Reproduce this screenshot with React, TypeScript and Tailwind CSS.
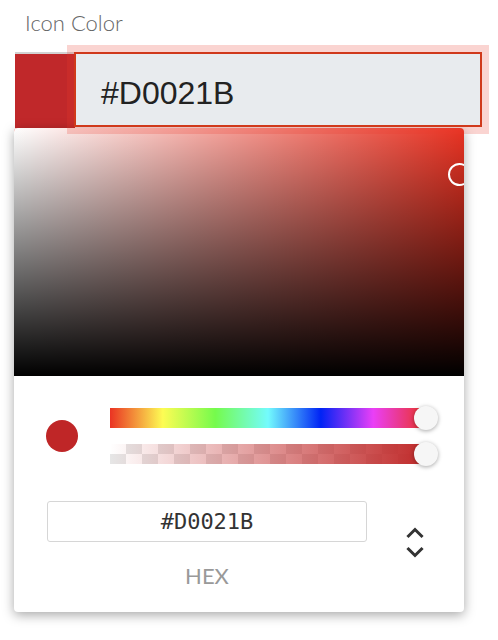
const HUE = '#ea3323';

const Chevrons = () => (
  <svg width="18" height="34" viewBox="0 0 18 34" fill="none">
    <polyline points="2.5,10 9,3.5 15.5,10" stroke="#333" strokeWidth="3" strokeLinecap="square" />
    <polyline points="2.5,23 9,29.5 15.5,23" stroke="#333" strokeWidth="3" strokeLinecap="square" />
  </svg>
);

const App = () => {
  return (
    <div className="relative w-[498px] h-[640px] bg-white overflow-hidden">
      <div className="pt-[10px] pl-[25px] h-[36px] text-[22px] leading-[26px] font-light text-[#666] font-[Lato,'Open_Sans',sans-serif]">
        Icon Color
      </div>

      <div className="flex mt-[16px] ml-[15px]">
        <div className="w-[60px] h-[76px] bg-[#c0282a] border-t-2 border-[#d2d2d2]"></div>
        <div className="relative z-10 -ml-px w-[408px] h-[75px] border-2 border-[#d0391b] bg-[#e8ebee] shadow-[0_0_0_7px_rgba(232,58,44,0.22)] flex items-center pt-[7px] pl-[25px]">
          <span className="text-[32px] text-[#222] font-['Liberation_Sans',Arial,sans-serif]">#D0021B</span>
        </div>
      </div>

      {/* color picker popover */}
      <div className="absolute left-[14px] top-[128px] w-[450px] h-[484px] rounded-[4px] bg-white overflow-hidden shadow-[0_3px_12px_rgba(0,0,0,0.35)]">
        <div className="relative h-[248px] overflow-hidden" style={{ backgroundColor: HUE }}>
          <div className="absolute inset-0 bg-gradient-to-r from-white to-white/0"></div>
          <div className="absolute inset-0 bg-gradient-to-b from-black/0 to-black"></div>
          <div className="absolute left-[434px] top-[35px] w-[23px] h-[23px] rounded-full border-2 border-white"></div>
        </div>

        <div className="flex items-center pt-[32px] pl-[32px]">
          <div className="w-[32px] h-[32px] rounded-full bg-[#bf2627]"></div>
          <div className="ml-[32px] flex flex-col gap-[16px] w-[316px]">
            <div className="relative h-[20px]">
              <div className="h-full bg-[linear-gradient(to_right,#ea3323_0%,#fdfc54_16.7%,#75fb4c_33.3%,#73fbfd_50%,#0023f5_66.7%,#ea3ff7_83.3%,#ea3323_100%)]"></div>
              <div className="absolute right-[-12px] top-[-2px] w-[24px] h-[24px] rounded-full bg-[#f6f6f6] shadow-[0_1px_4px_rgba(0,0,0,0.35)]"></div>
            </div>
            <div className="relative h-[20px]">
              <div className="h-full bg-white bg-[repeating-conic-gradient(#e6e6e6_0_25%,#ffffff_0_50%)] bg-[length:32px_20px]">
                <div className="h-full bg-gradient-to-r from-[#c02a2a]/0 to-[#c02a2a]"></div>
              </div>
              <div className="absolute right-[-12px] top-[-2px] w-[24px] h-[24px] rounded-full bg-[#f6f6f6] shadow-[0_1px_4px_rgba(0,0,0,0.35)]"></div>
            </div>
          </div>
        </div>

        <div className="flex items-start mt-[37px] pl-[33px]">
          <div className="w-[320px] flex flex-col items-center">
            <div className="w-full h-[41px] border border-[#d6d6d6] rounded-[3px] flex items-center justify-center">
              <span className="text-[22px] text-[#333] font-['DejaVu_Sans_Mono',monospace]">#D0021B</span>
            </div>
            <div className="mt-[21px] text-[22px] leading-[26px] text-[#999] font-[Lato,sans-serif]">HEX</div>
          </div>
          <div className="ml-[39px] mt-[25px]">
            <Chevrons />
          </div>
        </div>
      </div>
    </div>
  );
};

export default App;
